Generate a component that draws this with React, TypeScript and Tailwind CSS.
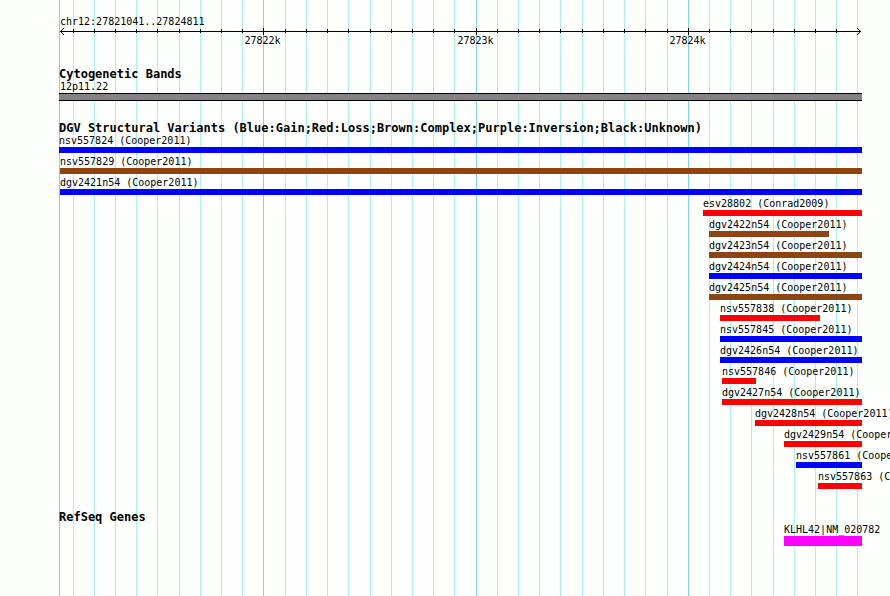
type Color = "blue" | "brown" | "red" | "magenta";

interface Feature {
  name: string;
  start: number;
  end: number;
  color: Color;
}

// Positions are track units, counted from the left edge of the region
const SPAN = 803;

const COLORS: Record<Color, string> = {
  blue: "bg-[#0000ff]",
  brown: "bg-[#8b4513]",
  red: "bg-[#ff0000]",
  magenta: "bg-[#ff00ff]",
};

const MAJOR = [
  { at: 204, label: "27822k" },
  { at: 417, label: "27823k" },
  { at: 629, label: "27824k" },
];

const MINOR = [
  14, 35, 56, 77, 98, 120, 141, 162, 183, 226, 247, 268, 289, 311, 332, 353, 374, 395,
  438, 459, 480, 501, 523, 544, 565, 586, 608, 650, 671, 692, 714, 735, 756, 777, 798,
];

const VARIANTS: Feature[] = [
  { name: "nsv557824 (Cooper2011)", start: 0, end: 803, color: "blue" },
  { name: "nsv557829 (Cooper2011)", start: 1, end: 803, color: "brown" },
  { name: "dgv2421n54 (Cooper2011)", start: 1, end: 803, color: "blue" },
  { name: "esv28802 (Conrad2009)", start: 644, end: 803, color: "red" },
  { name: "dgv2422n54 (Cooper2011)", start: 650, end: 770, color: "brown" },
  { name: "dgv2423n54 (Cooper2011)", start: 650, end: 803, color: "brown" },
  { name: "dgv2424n54 (Cooper2011)", start: 650, end: 803, color: "blue" },
  { name: "dgv2425n54 (Cooper2011)", start: 650, end: 803, color: "brown" },
  { name: "nsv557838 (Cooper2011)", start: 661, end: 761, color: "red" },
  { name: "nsv557845 (Cooper2011)", start: 661, end: 803, color: "blue" },
  { name: "dgv2426n54 (Cooper2011)", start: 661, end: 803, color: "blue" },
  { name: "nsv557846 (Cooper2011)", start: 663, end: 697, color: "red" },
  { name: "dgv2427n54 (Cooper2011)", start: 663, end: 803, color: "red" },
  { name: "dgv2428n54 (Cooper2011)", start: 696, end: 803, color: "red" },
  { name: "dgv2429n54 (Cooper2011)", start: 725, end: 803, color: "red" },
  { name: "nsv557861 (Cooper2011)", start: 737, end: 803, color: "blue" },
  { name: "nsv557863 (Cooper2011)", start: 759, end: 803, color: "red" },
];

const GENES: Feature[] = [
  { name: "KLHL42|NM_020782", start: 725, end: 803, color: "magenta" },
];

function pct(value: number) {
  return `${(value / SPAN) * 100}%`;
}

function Grid() {
  return (
    <div className="absolute inset-0" aria-hidden="true">
      {MINOR.map((x) => (
        <div key={x} className="absolute inset-y-0 w-px bg-[#afeeee]" style={{ left: pct(x) }} />
      ))}
      {[0, ...MAJOR.map((m) => m.at)].map((x) => (
        <div key={x} className="absolute inset-y-0 w-px bg-[#87ceeb]" style={{ left: pct(x) }} />
      ))}
    </div>
  );
}

function Ruler() {
  // the last minor tick would sit under the arrow head
  const ticks = MINOR.slice(0, -1);

  return (
    <div className="relative h-5">
      <div className="absolute left-px right-px top-[5px] h-px bg-black" />
      <svg
        className="absolute left-px top-0.5"
        width="4"
        height="7"
        viewBox="0 0 4 7"
        shapeRendering="crispEdges"
        aria-hidden="true"
      >
        <path d="M3 0h1v1h-1zM2 1h1v1h-1zM1 2h1v1h-1zM0 3h1v1h-1zM1 4h1v1h-1zM2 5h1v1h-1zM3 6h1v1h-1z" />
      </svg>
      <svg
        className="absolute right-px top-0.5"
        width="4"
        height="7"
        viewBox="0 0 4 7"
        shapeRendering="crispEdges"
        aria-hidden="true"
      >
        <path d="M0 0h1v1h-1zM1 1h1v1h-1zM2 2h1v1h-1zM3 3h1v1h-1zM2 4h1v1h-1zM1 5h1v1h-1zM0 6h1v1h-1z" />
      </svg>
      {ticks.map((x) => (
        <div key={x} className="absolute top-[3px] h-1 w-px bg-black" style={{ left: pct(x) }} />
      ))}
      {MAJOR.map((m) => (
        <div key={m.at} className="absolute top-0.5 flex w-px flex-col items-center" style={{ left: pct(m.at) }}>
          <div className="h-[7px] w-px bg-black" />
          <span className="pr-0.5 text-[10px] leading-3">{m.label}</span>
        </div>
      ))}
    </div>
  );
}

function FeatureRow({ feature, thick }: { feature: Feature; thick?: boolean }) {
  return (
    <li>
      <div
        className="pt-0.5 text-[10px] leading-[13px] whitespace-nowrap"
        style={{ marginLeft: pct(feature.start) }}
      >
        {feature.name}
      </div>
      <div
        className={`${thick ? "h-2.5" : "h-1.5"} ${COLORS[feature.color]}`}
        style={{ marginLeft: pct(feature.start), width: pct(feature.end - feature.start) }}
      />
    </li>
  );
}

function TrackTitle({ children }: { children: string }) {
  return <h2 className="text-[12px] leading-2 font-bold whitespace-nowrap">{children}</h2>;
}

export default function App() {
  return (
    <main className="min-h-screen overflow-hidden bg-[#fdfffc] pl-[59px] pr-7 font-['DejaVu_Sans_Mono',monospace] text-black">
      <div className="relative min-h-screen">
        <Grid />
        <div className="relative pt-[18px]">
          <h1 className="pl-px text-[10px] leading-2 font-normal">chr12:27821041..27824811</h1>
          <Ruler />

          <section className="mt-6">
            <TrackTitle>Cytogenetic Bands</TrackTitle>
            <p className="pt-0.5 pl-px text-[10px] leading-[13px]">12p11.22</p>
            <div className="h-2 border-y border-black bg-[#848284]" />
          </section>

          <section className="mt-[23px]">
            <TrackTitle>
              DGV Structural Variants (Blue:Gain;Red:Loss;Brown:Complex;Purple:Inversion;Black:Unknown)
            </TrackTitle>
            <ul>
              {VARIANTS.map((v) => (
                <FeatureRow key={v.name} feature={v} />
              ))}
            </ul>
          </section>

          <section className="mt-6">
            <TrackTitle>RefSeq Genes</TrackTitle>
            <ul>
              {GENES.map((g) => (
                <FeatureRow key={g.name} feature={g} thick />
              ))}
            </ul>
          </section>
        </div>
      </div>
    </main>
  );
}
